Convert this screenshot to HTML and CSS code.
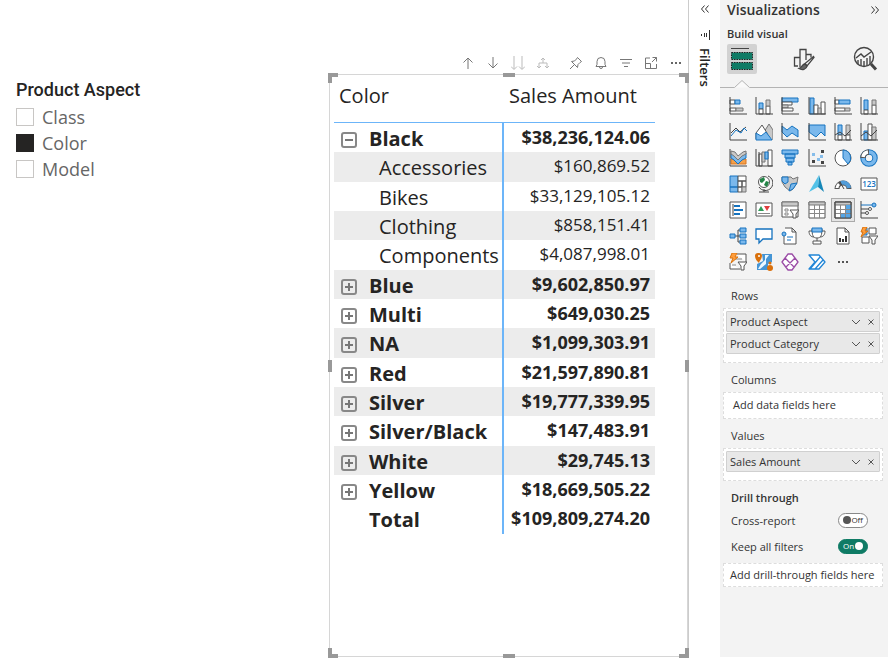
FILE: index.html
```html
<!DOCTYPE html>
<html lang="en">
<head>
<meta charset="utf-8">
<title>Sales report</title>
<link rel="stylesheet" href="styles.css">
</head>
<body>
<div class="app">
<main class="canvas">
  <fieldset class="slicer">
    <legend>Product Aspect</legend>
    <label><input type="checkbox">Class</label>
    <label><input type="checkbox" checked>Color</label>
    <label><input type="checkbox">Model</label>
  </fieldset>

  <section class="visual">
    <div class="toolbar">
      <button aria-label="Drill up"><svg viewBox="0 0 14 14"><path d="M7 13V2M2.500 6.500L7 2l4.500 4.500"/></svg></button>
      <button aria-label="Drill down"><svg viewBox="0 0 14 14"><path d="M7 1v11M2.500 7.500L7 12l4.500-4.500"/></svg></button>
      <button class="dim" aria-label="Next level"><svg viewBox="0 0 14 14"><path d="M3 0v13M0 10.500L3 13.500l3-3M11 0v13M8 10.500l3 3 3-3"/></svg></button>
      <button class="dim" aria-label="Expand all"><svg viewBox="0 0 14 14"><path d="M7 2v5M3 12V7h8v5M1 10l2 2 2-2M9 10l2 2 2-2M5 4l2-2 2 2"/></svg></button>
      <button class="gap" aria-label="Pin"><svg viewBox="0 0 14 14"><path d="M8.500 1.500l4 4-1.500 1-2 2-.5 3-6-6 3-.5 2-2zM5 9l-4 4"/></svg></button>
      <button aria-label="Alert"><svg viewBox="0 0 14 14"><path d="M2 10.500l1-2V5.500a4 4 0 0 1 8 0v3l1 2zM5.500 11a1.500 1.500 0 0 0 3 0"/></svg></button>
      <button aria-label="Filters on visual"><svg viewBox="0 0 14 14"><path d="M1 3.500h12M3 7h8M5 10.500h4"/></svg></button>
      <button aria-label="Focus mode"><svg viewBox="0 0 14 14"><path d="M6 2H1.500v10.500h11V8M8.500 1.500h4v4M12.500 1.500L8 6M1.500 7.500h5v5"/></svg></button>
      <button aria-label="More options"><svg viewBox="0 0 14 14"><path class="dots" d="M2 6h2v2H2zM6 6h2v2H6zM10 6h2v2h-2z"/></svg></button>
    </div>
    <div class="frame">
      <i class="h tl"></i><i class="h tm"></i><i class="h tr"></i><i class="h ml"></i><i class="h mr"></i><i class="h bl"></i><i class="h bm"></i><i class="h br"></i>
      <table>
        <thead><tr><th scope="col">Color</th><th scope="col">Sales Amount</th></tr></thead>
        <tbody>
          <tr><th scope="row"><button class="tog minus" aria-label="Collapse Black"></button>Black</th><td>$38,236,124.06</td></tr>
          <tr class="child"><th scope="row">Accessories</th><td>$160,869.52</td></tr>
          <tr class="child"><th scope="row">Bikes</th><td>$33,129,105.12</td></tr>
          <tr class="child"><th scope="row">Clothing</th><td>$858,151.41</td></tr>
          <tr class="child"><th scope="row">Components</th><td>$4,087,998.01</td></tr>
          <tr><th scope="row"><button class="tog" aria-label="Expand Blue"></button>Blue</th><td>$9,602,850.97</td></tr>
          <tr><th scope="row"><button class="tog" aria-label="Expand Multi"></button>Multi</th><td>$649,030.25</td></tr>
          <tr><th scope="row"><button class="tog" aria-label="Expand NA"></button>NA</th><td>$1,099,303.91</td></tr>
          <tr><th scope="row"><button class="tog" aria-label="Expand Red"></button>Red</th><td>$21,597,890.81</td></tr>
          <tr><th scope="row"><button class="tog" aria-label="Expand Silver"></button>Silver</th><td>$19,777,339.95</td></tr>
          <tr><th scope="row"><button class="tog" aria-label="Expand Silver/Black"></button>Silver/Black</th><td>$147,483.91</td></tr>
          <tr><th scope="row"><button class="tog" aria-label="Expand White"></button>White</th><td>$29,745.13</td></tr>
          <tr><th scope="row"><button class="tog" aria-label="Expand Yellow"></button>Yellow</th><td>$18,669,505.22</td></tr>
          <tr class="total"><th scope="row">Total</th><td>$109,809,274.20</td></tr>
        </tbody>
      </table>
    </div>
  </section>
</main>

<aside class="filters">
  <button aria-label="Expand filters"><svg viewBox="0 0 10 10"><path d="M4.500 1.500L1.500 5l3 3.500M8.500 1.500L5.500 5l3 3.500"/></svg></button>
  <svg class="bars" viewBox="0 0 10 10"><path d="M1.500 4v2M4.500 3v4M6.500 3v4M9.500 0v10"/></svg>
  <h2>Filters</h2>
</aside>

<aside class="viz">
  <header>
    <h2>Visualizations</h2>
    <button aria-label="Collapse pane"><svg viewBox="0 0 10 10"><path d="M1.500 1.500L4.500 5l-3 3.500M5.500 1.500L8.500 5l-3 3.500"/></svg></button>
  </header>
  <h3>Build visual</h3>
  <div class="tabs">
    <button class="on" aria-label="Build"><svg viewBox="0 0 30 30"><path d="M4 4.500h18" stroke="#444" fill="none"/><path fill="#0f7b65" stroke="#222" stroke-dasharray="1.500 1" d="M4.500 8.500h21v7h-21zM4.500 18.500h21v7h-21z"/></svg></button>
    <button aria-label="Format"><svg viewBox="0 0 30 30" fill="none" stroke="#444" stroke-width="1.300"><path d="M9 22H5.500V13.500H11V23M11 14V5.500h6V16M17 10.500h5v3"/><path fill="#f3f3f3" d="M24.500 12.500l-8.500 7 2 2.500 7-8.500z"/><path fill="#666" d="M16 20c-3 0-3 4-6 4.500 3 2 7.500 1 8-2.500z"/></svg></button>
    <button aria-label="Analytics"><svg viewBox="0 0 30 30" fill="none" stroke="#444" stroke-width="1.400"><circle cx="14" cy="13" r="9.500"/><path d="M6 14l5-4 3 3 7-5M8 20v-4M11 22v-7M14 22v-5M17 22v-8M20 20v-8"/><path stroke-width="3" d="M21 20l5 5.500"/></svg></button>
  </div>
  <div class="tabline"><svg viewBox="0 0 168 9" preserveAspectRatio="xMinYMin"><path d="M0 8.500h14.500l7.500-7 7.500 7H168" fill="#f9f9f9" stroke="#b3b3b3"/></svg></div>

  <div class="gallery">
    <button aria-label="Stacked bar chart"><svg viewBox="0 0 18 18"><path class="w" d="M1 3h5v4H1z"/><path class="f" d="M6 3h5v4H6z"/><path class="w" d="M1 11h6v3H1z"/><path class="g" d="M7 11h7v3H7z"/><path class="k" d="M1 0v17h17"/></svg></button>
    <button aria-label="Stacked column chart"><svg viewBox="0 0 18 18"><path class="f" d="M4 6h4v6H4z"/><path class="w" d="M4 12h4v5H4zM11 9h4v8h-4z"/><path class="g" d="M11 3h4v6h-4z"/><path class="k" d="M1 0v17h17"/></svg></button>
    <button aria-label="Clustered bar chart"><svg viewBox="0 0 18 18"><path class="f" d="M1 1h16v4H1z"/><path class="w" d="M1 5h10v3H1z"/><path class="g" d="M1 8h6v3H1z"/><path class="w" d="M1 11h11v3H1z"/><path class="k" d="M1 0v17h17"/></svg></button>
    <button aria-label="Clustered column chart"><svg viewBox="0 0 18 18"><path class="f" d="M2 1h4v16H2z"/><path class="w" d="M6 8h4v9H6zM13 5h4v12h-4z"/><path class="g" d="M10 11h3v6h-3z"/><path class="k" d="M1 0v17h17"/></svg></button>
    <button aria-label="100% stacked bar chart"><svg viewBox="0 0 18 18"><path class="w" d="M1 3h4v4H1zM1 11h10v3H1z"/><path class="f" d="M5 3h11v4H5z"/><path class="g" d="M11 11h5v3h-5z"/><path class="k" d="M1 0v17h17"/></svg></button>
    <button aria-label="100% stacked column chart"><svg viewBox="0 0 18 18"><path class="f" d="M4 3h4v10H4z"/><path class="w" d="M4 13h4v4H4zM12 8h4v9h-4z"/><path class="g" d="M12 3h4v5h-4z"/><path class="k" d="M1 0v17h17"/></svg></button>

    <button aria-label="Line chart"><svg viewBox="0 0 18 18"><path class="k" d="M2 10l5-5 4 4 6-5"/><path class="b" d="M2 13l5-6 5 3 3-5 3 3"/><path class="k" d="M1 0v17h17"/></svg></button>
    <button aria-label="Area chart"><svg viewBox="0 0 18 18"><path class="g" d="M9 9l5-8 4 6v10"/><path class="w" d="M1 10l6-8 5 8v6H1z"/><path class="f" d="M1 17V10l5 3 5-4 6 8z"/></svg></button>
    <button aria-label="Stacked area chart"><svg viewBox="0 0 18 18"><path class="f" d="M1 3l5 4 5-4 6 4v7l-6-4-5 4-5-5z"/><path class="k" d="M1 0v17h17"/></svg></button>
    <button aria-label="100% stacked area chart"><svg viewBox="0 0 18 18"><path class="f" d="M1 2h16v11l-4-4-5 5-3-2-4-3z"/><path class="k" d="M1 0v17h17"/></svg></button>
    <button aria-label="Line and stacked column chart"><svg viewBox="0 0 18 18"><path class="f" d="M4 2h4v10H4z"/><path class="g" d="M12 2h4v10h-4z"/><path class="w" d="M4 12h4v5H4zM12 12h4v5h-4z"/><path class="k" d="M1 12l5-3 5 4 6-6M1 0v17h17"/></svg></button>
    <button aria-label="Line and clustered column chart"><svg viewBox="0 0 18 18"><path class="f" d="M4 8h4v9H4z"/><path class="w" d="M8 1h4v16H8z"/><path class="g" d="M12 4h4v13h-4z"/><path class="k" d="M1 13l5-4 5 4 6-6M1 0v17h17"/></svg></button>

    <button aria-label="Ribbon chart"><svg viewBox="0 0 18 18"><path fill="#f5a04a" stroke="#d97720" d="M2 10h3l4 4 4-4h4v5H2z"/><path class="f" d="M2 5l3 1 4 5 5-6 3-1v5l-4 2-4 4-4-4-3-2z"/><path class="g" d="M2 2l4 1 3 4 5-4 3-1v3l-4 2-4 4-4-4-3-2z"/><path class="k" d="M1 0v17h17"/></svg></button>
    <button aria-label="Waterfall chart"><svg viewBox="0 0 18 18"><path class="w" d="M4 5h3v12H4zM13 1h4v16h-4z"/><path class="g" d="M7 3h3v10H7z"/><path class="f" d="M10 3h3v7h-3z"/><path class="k" d="M1 0v17h17M4 3v14"/></svg></button>
    <button aria-label="Funnel"><svg viewBox="0 0 18 18"><path class="f" d="M1 1h16v4H1zM4 5h10v4H4zM5 9h8v4H5zM7 13h4v3H7z"/></svg></button>
    <button aria-label="Scatter chart"><svg viewBox="0 0 18 18"><path fill="#444" d="M13 1h3v3h-3zM4 11h3v3H4zM13 12h3v3h-3z"/><path fill="#86bdea" d="M4 4h3v3H4zM9 9h3v3H9zM12 6h3v3h-3z"/><path class="k" d="M1 0v17h17"/></svg></button>
    <button aria-label="Pie chart"><svg viewBox="0 0 18 18"><circle class="w" cx="9" cy="9" r="8"/><path class="f" d="M9 1a8 8 0 0 1 5 14L9 9z"/></svg></button>
    <button aria-label="Donut chart"><svg viewBox="0 0 18 18"><circle cx="9" cy="9" r="6" fill="none" stroke="#1673bf" stroke-width="5.500"/><circle cx="9" cy="9" r="6" fill="none" stroke="#7ab8ec" stroke-width="3.500"/><path d="M3 9a6 6 0 0 1 6-6" fill="none" stroke="#555" stroke-width="5.500"/><path d="M3 8a6 6 0 0 1 5-5" fill="none" stroke="#fff" stroke-width="3.500"/></svg></button>

    <button aria-label="Treemap"><svg viewBox="0 0 18 18"><path class="f" d="M1 1h8v11H1zM1 12h8v5H1z"/><path class="w" d="M9 1h8v5H9zM9 6h4v6H9zM13 6h4v6h-4zM9 12h4v5H9z"/><path class="g" d="M13 12h4v5h-4z"/></svg></button>
    <button aria-label="Map"><svg viewBox="0 0 18 18"><circle class="w" cx="9" cy="7" r="5.500"/><path fill="#238447" d="M5 4l4-2 1 3-3 3-2-1zM11 6l3 1-2 5-3-2z"/><path class="k" d="M13 1a7.500 7.500 0 1 1-9 11M9 14v3M4 17h10"/></svg></button>
    <button aria-label="Filled map"><svg viewBox="0 0 18 18"><path class="g" d="M1 2h9l2 2 5-2-1 6-4 6-3 2-5-4-3-5z"/><path class="f" d="M1 2h6v5l-3 2-3-3zM10 9l6-1-4 6-4 2z"/></svg></button>
    <button aria-label="Azure map"><svg viewBox="0 0 18 18"><path fill="#1687b8" d="M11 0l5 17-6-5z"/><path fill="#53c2e8" d="M11 0L1 17l9-5z"/></svg></button>
    <button aria-label="Gauge"><svg viewBox="0 0 18 18"><path d="M3 14a6 6 0 0 1 12 0" fill="none" stroke="#555" stroke-width="5"/><path d="M3 13a6 6 0 0 1 2-4" fill="none" stroke="#fff" stroke-width="3"/><path d="M7 8a6 6 0 0 1 8 5" fill="none" stroke="#519cd9" stroke-width="4"/><path class="k" d="M6 7l4 7"/></svg></button>
    <button aria-label="Card"><svg viewBox="0 0 18 18"><path class="w" d="M1 3h16v12H1z"/><text x="9" y="12" text-anchor="middle">123</text></svg></button>

    <button aria-label="Multi-row card"><svg viewBox="0 0 18 18"><path class="w" d="M1 1h16v16H1z"/><path class="b2" d="M5 5h6M5 9h9M5 13h6"/><path class="k" d="M4 3v12"/></svg></button>
    <button aria-label="KPI"><svg viewBox="0 0 18 18"><path class="w" d="M1 2h16v13H1z"/><path fill="#2f9b57" d="M3 10l3-5 3 5z"/><path fill="#df3f3f" d="M9 5h6l-3 5z"/><path class="k thin" d="M3 12.500h12"/></svg></button>
    <button aria-label="Slicer"><svg viewBox="0 0 18 18"><path class="w" d="M1 1h16v15H1z"/><path class="g" d="M1 1h16v4H1z"/><path class="k thin" d="M4 8h3v2H4zM4 12h3v2H4z"/><path class="w" d="M9 9h9l-3 4v4h-3v-4z"/></svg></button>
    <button aria-label="Table"><svg viewBox="0 0 18 18"><path class="w" d="M1 1h16v16H1z"/><path class="g" d="M1 1h16v3H1z"/><path class="k thin" d="M1 8.500h16M1 12.500h16M6.500 4v13M11.500 4v13"/></svg></button>
    <button class="sel" aria-label="Matrix"><svg viewBox="0 0 18 18"><path class="w" d="M1 1h16v16H1z"/><path class="g" d="M1 1h16v3H1z"/><path fill="#55a5e5" d="M11 4h6v13H6v-4h5z"/><path class="k thin" d="M1 8.500h16M1 12.500h16M6.500 4v13M11.500 4v13"/><path class="k" d="M1 1h16v16H1z"/></svg></button>
    <button aria-label="Key influencers"><svg viewBox="0 0 18 18"><path class="k" d="M1 0v17h17M1 8h8M1 12h5"/><path class="b" d="M1 4h11"/><circle class="f" cx="14" cy="4" r="2"/><circle class="w" cx="10" cy="8" r="1.500"/><circle class="w" cx="7" cy="12" r="1.500"/></svg></button>

    <button aria-label="Decomposition tree"><svg viewBox="0 0 18 18"><path class="k" d="M6 9h5M11 3H9v12h2"/><path class="f" d="M1 7h5v4H1zM11 1h6v4h-6zM11 7h6v4h-6zM11 13h6v4h-6z"/></svg></button>
    <button aria-label="Q&amp;A"><svg viewBox="0 0 18 18"><path fill="#fff" stroke="#1673bf" stroke-width="1.300" d="M1 2h16v10H8l-4 4v-4H1z"/></svg></button>
    <button aria-label="Smart narrative"><svg viewBox="0 0 18 18"><path class="w" d="M4 1h7l4 4v12H3V9M11 1v4h4"/><path class="b" d="M6 10h6M6 13h4"/><circle class="f" cx="3" cy="7" r="2"/></svg></button>
    <button aria-label="Goals"><svg viewBox="0 0 18 18"><path class="w" d="M4 4H1c0 4 2 6 5 6M14 4h3c0 4-2 6-5 6M9 11v3M5 17h8v-3H5z"/><path class="w" d="M4 2h10c0 6-1 9-5 9S4 8 4 2z"/><path class="f" d="M4 1h10v4H4z"/></svg></button>
    <button aria-label="Paginated report"><svg viewBox="0 0 18 18"><path class="w" d="M3 1h8l4 4v12H3zM11 1v4h4"/><path fill="#333" d="M5 11h2v4H5zM8 12h2v3H8zM11 9h2v6h-2z"/></svg></button>
    <button aria-label="Power Apps slicer"><svg viewBox="0 0 18 18"><path class="w" d="M9 1h7v6H9zM2 10h7v6H2z"/><path class="f" d="M3 1h4v7H3z"/><path fill="#ff9d3c" stroke="#d9730d" d="M3 0h4L5 4h3l-7 6 2-5H1z"/><path class="w" d="M9 9h9l-3 4v4h-3v-4z"/></svg></button>

    <button aria-label="Advanced slicer"><svg viewBox="0 0 18 18"><path class="w" d="M8 1h9v8M1 10v6h10"/><path class="k thin" d="M6 6h7M3 12h4"/><path fill="#ff9d3c" stroke="#d9730d" d="M3 0h5L6 4h3l-7 6 2-5H1z"/><path class="w" d="M9 9h9l-3 4v4h-3v-4z"/></svg></button>
    <button aria-label="ArcGIS map"><svg viewBox="0 0 18 18"><path fill="#4595d5" d="M7 1h10v8l-4 2v6H2v-6l6-3z"/><path fill="#e9f6ff" d="M10 2h4l-3 4v5l-6 5H3l3-5 4-4z"/><path fill="#d9700b" d="M3 0h1a3 3 0 0 1 3 3c0 3-3 5-3 7-2-2-4-4-4-7a3 3 0 0 1 3-3z"/><circle fill="#fff" cx="4" cy="3" r="1"/><circle fill="#d9700b" cx="15" cy="15" r="3"/><circle fill="#d9700b" cx="15" cy="10" r="1.500"/></svg></button>
    <button aria-label="Power Apps"><svg viewBox="0 0 18 18"><path fill="#fff" stroke="#9b4ca6" stroke-width="1.300" stroke-linejoin="round" d="M7 1h4l6 8-6 8H7L1 9zM4 5l9 9M14 5l-9 9"/></svg></button>
    <button aria-label="Power Automate"><svg viewBox="0 0 18 18"><path fill="#fff" stroke="#2085d6" stroke-width="1.300" stroke-linejoin="round" d="M1 2h10l6 7-6 7H1l6-7zM12 4L2 16M15 7l-8 9"/></svg></button>
    <button aria-label="More visuals"><svg viewBox="0 0 18 18"><path fill="#555" d="M4 8h2v2H4zM8 8h2v2H8zM12 8h2v2h-2z"/></svg></button>
  </div>

  <div class="wells">
    <h4>Rows</h4>
    <div class="well">
      <div class="chip">Product Aspect<button aria-label="Field menu"><svg viewBox="0 0 8 8"><path d="M0 2l4 4 4-4"/></svg></button><button aria-label="Remove"><svg viewBox="0 0 8 8"><path d="M1.500 1.500l5 5M6.500 1.500l-5 5"/></svg></button></div>
      <div class="chip">Product Category<button aria-label="Field menu"><svg viewBox="0 0 8 8"><path d="M0 2l4 4 4-4"/></svg></button><button aria-label="Remove"><svg viewBox="0 0 8 8"><path d="M1.500 1.500l5 5M6.500 1.500l-5 5"/></svg></button></div>
    </div>
    <h4>Columns</h4>
    <div class="well empty">Add data fields here</div>
    <h4>Values</h4>
    <div class="well">
      <div class="chip">Sales Amount<button aria-label="Field menu"><svg viewBox="0 0 8 8"><path d="M0 2l4 4 4-4"/></svg></button><button aria-label="Remove"><svg viewBox="0 0 8 8"><path d="M1.500 1.500l5 5M6.500 1.500l-5 5"/></svg></button></div>
    </div>
    <h3 class="drill">Drill through</h3>
    <div class="opt"><span>Cross-report</span><button class="switch" role="switch" aria-checked="false" aria-label="Cross-report"><i></i>Off</button></div>
    <div class="opt"><span>Keep all filters</span><button class="switch on" role="switch" aria-checked="true" aria-label="Keep all filters">On<i></i></button></div>
    <div class="well through">Add drill-through fields here</div>
  </div>
</aside>
</div>
</body>
</html>
```

FILE: styles.css
```css
* { box-sizing: border-box; }
body { margin: 0; background: #fff; color: #252423; font-family: "Open Sans", "Noto Sans", sans-serif; }
button { padding: 0; border: 0; background: none; font: inherit; color: inherit; }
h2, h3, h4 { margin: 0; font-weight: 600; }
svg { display: block; }

.app { display: flex; height: 100vh; padding-bottom: 6px; }
.canvas { flex: 1; display: flex; justify-content: space-between; min-width: 0; }

.slicer { margin: 79px 0 0 16px; padding: 0; border: 0; color: #666; font-size: 18px; }
.slicer legend { padding: 0; color: #252423; font: 500 18px/22px Roboto, sans-serif; }
.slicer label { display: flex; align-items: center; gap: 8px; height: 26px; }
.slicer legend + label { margin-top: 3px; }
.slicer input { appearance: none; width: 18px; height: 18px; margin: 0; border: 1px solid #c8c6c4; background: #fff; }
.slicer input:checked { background: #252423; border-color: #252423; }

.visual { width: 359px; display: flex; flex-direction: column; padding-top: 56px; }
.toolbar { display: flex; justify-content: flex-end; gap: 11px; padding: 0 5px 4px 0; }
.toolbar svg { width: 14px; height: 14px; fill: none; stroke: #777; }
.toolbar .dim svg { stroke: #bbb; }
.toolbar .gap { margin-left: 8px; }
.toolbar .dots { fill: #666; stroke: none; }
.frame { flex: 1; position: relative; border: 1px solid #d6d6d6; padding: 0 32px 0 4px; }

.h { position: absolute; width: 10px; height: 10px; border: 0 solid #999; }
.tl { top: -2px; left: -2px; border-width: 4px 0 0 4px; }
.tr { top: -2px; right: -2px; border-width: 4px 4px 0 0; }
.bl { bottom: -2px; left: -2px; border-width: 0 0 4px 4px; }
.br { bottom: -2px; right: -2px; border-width: 0 4px 4px 0; }
.tm, .bm { left: 50%; width: 12px; height: 4px; margin-left: -6px; background: #999; }
.tm { top: -2px; }
.bm { bottom: -2px; }
.ml, .mr { top: 50%; width: 4px; height: 12px; margin-top: -6px; background: #999; }
.ml { left: -2px; }
.mr { right: -2px; }

table { width: 100%; border-collapse: separate; border-spacing: 0; line-height: 24px; }
th, td { padding: 0 5px; white-space: nowrap; vertical-align: top; }
th { text-align: left; font-size: 20px; }
td { text-align: right; font-size: 18px; font-weight: 700; }
thead th { height: 48px; padding-top: 9px; border-bottom: 1px solid #6cb5f9; font-weight: 400; }
tbody tr { height: 29px; }
tbody tr:nth-child(3n+2) { height: 30px; }
tbody tr:nth-child(even):not(.total) { background: #ececec; }
tbody th { width: 170px; padding: 4px 0 0 7px; border-right: 2px solid #6cb5f9; }
tbody td { padding-top: 2px; }
.child th { padding-left: 45px; font-weight: 400; }
.child td { font-size: 17px; font-weight: 400; }
.total th { padding-left: 35px; }
.tog { display: inline-block; width: 16px; height: 16px; margin-right: 12px; border: 2px solid #888; border-radius: 3px; vertical-align: 0; background: linear-gradient(#777, #777) center / 8px 2px no-repeat, linear-gradient(#777, #777) center / 2px 8px no-repeat; }
.tog.minus { background: linear-gradient(#777, #777) center / 8px 2px no-repeat; }

.filters { width: 32px; display: flex; flex-direction: column; align-items: center; border-left: 1px solid #ccc; padding-top: 4px; }
.filters svg { width: 10px; height: 10px; fill: none; stroke: #333; }
.filters .bars { margin: 16px 0 8px; }
.filters h2 { writing-mode: vertical-rl; font-size: 13px; line-height: 18px; }

.viz { width: 168px; background: #f3f3f3; color: #333; font-size: 11px; }
.viz header { display: flex; justify-content: space-between; align-items: center; padding: 0 8px 0 7px; }
.viz header h2 { font-size: 14px; line-height: 19px; }
.viz header svg { width: 10px; height: 10px; fill: none; stroke: #333; }
.viz h3 { padding-left: 7px; font-size: 11px; line-height: 16px; }
.viz header + h3 { padding-top: 7px; }
.tabs { display: flex; justify-content: space-between; padding: 2px 8px 5px 7px; }
.tabs button { width: 30px; height: 30px; border-radius: 2px; }
.tabs .on { background: #d2d2d2; }
.tabline svg { width: 100%; height: 9px; }
.gallery { display: grid; grid-template-columns: repeat(6, 1fr); grid-auto-rows: 26px; padding: 5px 6px 4px 5px; border-bottom: 1px solid #e0e0e0; }
.gallery button { display: grid; place-items: center; }
.gallery svg { width: 18px; height: 18px; }
.gallery .sel { place-self: center; width: 24px; height: 24px; border: 1px solid #aaa; background: #e5e5e5; }
.gallery text { fill: #1673bf; font-size: 8px; font-weight: 600; }
.f { fill: #7ab8ec; stroke: #1673bf; }
.g { fill: #c8c8c8; stroke: #777; }
.w { fill: #fff; stroke: #555; }
.k { fill: none; stroke: #444; }
.b { fill: none; stroke: #1673bf; }
.b2 { fill: none; stroke: #1673bf; stroke-width: 2; }
.thin { stroke: #888; }

.wells { padding: 8px 5px 0 3px; }
.wells h4 { padding-left: 8px; font-size: 11px; font-weight: 400; line-height: 16px; }
.well { margin: 4px 0 9px; padding: 2px 2px 7px; border: 1px dashed #ddd; background: #fff; }
.chip { display: flex; align-items: center; height: 21px; padding: 0 4px 0 3px; margin-bottom: 1px; border: 1px solid #d0d0d0; border-radius: 1px; background: #e8e8e8; }
.chip button { margin-left: 7px; }
.chip button:first-of-type { margin-left: auto; }
.chip svg { width: 8px; height: 8px; fill: none; stroke: #555; }
.well.empty { padding: 4px 9px 5px; line-height: 16px; }
.well.through { padding: 3px 6px; line-height: 16px; white-space: nowrap; }
.wells .drill { padding: 0 0 1px 8px; }
.opt { display: flex; justify-content: space-between; align-items: center; height: 26px; padding: 0 15px 0 8px; }
.switch { display: flex; align-items: center; justify-content: space-between; width: 30px; height: 15px; padding: 0 4px; border: 1px solid #888; border-radius: 8px; background: #fff; font-size: 8px; line-height: 12px; }
.switch i { width: 8px; height: 8px; border-radius: 50%; background: #555; }
.switch.on { border-color: #0f7b65; background: #0f7b65; color: #fff; }
.switch.on i { background: #fff; }
```
